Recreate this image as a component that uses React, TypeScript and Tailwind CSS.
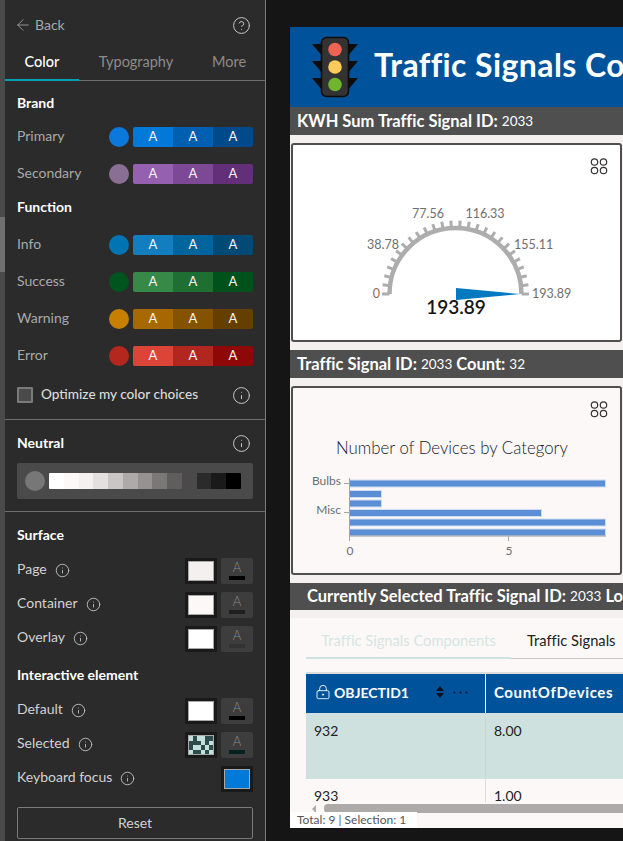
import React from "react";
import { ArrowLeft, CircleHelp, Info, LockKeyhole } from "lucide-react";

const Heading = ({ children, className = "" }: { children: React.ReactNode; className?: string }) => (
  <div className={`h-6 flex items-center text-[14px] font-bold text-white ${className}`}>{children}</div>
);

const ColorRow = ({ label, dot, shades, className = "" }: { label: string; dot: string; shades: string[]; className?: string }) => (
  <div className={`h-5 flex items-center ${className}`}>
    <span className="w-[92px] text-[14px] text-[#a9a9a9] -mt-[3px]">{label}</span>
    <span className="w-5 h-5 rounded-full" style={{ backgroundColor: dot }} />
    <div className="ml-1 flex w-[120px] h-5 rounded-[2px] overflow-hidden">
      {shades.map((s, i) => (
        <span key={i} className="flex-1 flex items-center justify-center pb-[1px] text-[13px] text-[#f4f4f4]" style={{ backgroundColor: s }}>A</span>
      ))}
    </div>
  </div>
);

const SmallInfo = ({ className = "" }: { className?: string }) => (
  <Info size={15} strokeWidth={1.5} className={`text-[#bdbdbd] -mt-[1px] ${className}`} />
);

const Swatch = ({ fill, checker }: { fill?: string; checker?: boolean }) => (
  <div className="w-8 h-[26px] bg-[#1a1a1a] flex items-center justify-center">
    <div className="w-[26px] h-5 border border-[#a8a8a8]" style={{ backgroundColor: fill }}>
      {checker && (
        <svg viewBox="0 0 6 4" preserveAspectRatio="none" className="w-full h-full block" shapeRendering="crispEdges">
          <rect width="6" height="4" fill="#2f4c4c" />
          {[[0,0],[2,0],[3,0],[3,1],[5,1],[1,2],[2,2],[4,2],[0,3],[3,3],[5,3]].map(([x, y], i) => (
            <rect key={i} x={x} y={y} width="1" height="1" fill="#c4dfdc" />
          ))}
        </svg>
      )}
    </div>
  </div>
);

const TextBox = ({ bar }: { bar: string }) => (
  <div className="w-8 h-[26px] ml-1 bg-[#3d3d3d] rounded-[2px] flex flex-col items-center pt-[3px]">
    <span className="text-[13px] leading-[13px] font-light text-[#8a8a8a]">A</span>
    <span className="w-4 h-1 mt-[2px]" style={{ backgroundColor: bar }} />
  </div>
);

const SurfaceRow = ({ label, fill, bar, checker, className = "" }: { label: string; fill?: string; bar: string; checker?: boolean; className?: string }) => (
  <div className={`h-[26px] flex items-center ${className}`}>
    <span className="text-[14px] text-[#d2d2d2] -mt-[5px]">{label}</span>
    <SmallInfo className="ml-2" />
    <div className="ml-auto flex">
      <Swatch fill={fill} checker={checker} />
      <TextBox bar={bar} />
    </div>
  </div>
);

const TitleBar = ({ children, className = "" }: { children: React.ReactNode; className?: string }) => (
  <div className={`shrink-0 bg-[#4f4f4f] flex items-center whitespace-nowrap text-white text-[16.5px] font-bold [font-variant-ligatures:none] ${className}`}>{children}</div>
);

const Small = ({ children }: { children: React.ReactNode }) => <span className="text-[13.5px] font-normal">{children}</span>;

const Gauge = () => {
  const cx = 455.5;
  const cy = 294;
  const ticks = Array.from({ length: 26 }, (_, i) => (Math.PI * i) / 25);
  return (
    <svg viewBox="293 145 327 195" className="w-[327px] h-[195px] block">
      <g fill="none" stroke="#adadad">
        <path d={`M${cx - 66} ${cy} A66 66 0 0 1 ${cx + 66} ${cy}`} strokeWidth="4.5" />
        {ticks.map((a, i) => (
          <line key={i} x1={cx - 66 * Math.cos(a)} y1={cy - 66 * Math.sin(a)} x2={cx - 73.5 * Math.cos(a)} y2={cy - 73.5 * Math.sin(a)} strokeWidth="3" />
        ))}
      </g>
      <polygon points="456,288 456,300 520,294" fill="#0079c1" />
      <g fill="#6e6e6e" fontSize="12.5">
        <text x="380" y="298" textAnchor="end" fill="#8a6a55">0</text>
        <text x="367" y="249">38.78</text>
        <text x="428" y="218" textAnchor="middle">77.56</text>
        <text x="485" y="218" textAnchor="middle">116.33</text>
        <text x="514" y="249">155.11</text>
        <text x="532" y="298">193.89</text>
      </g>
      <text x="456" y="314" textAnchor="middle" fontSize="19" fontWeight="600" fill="#151515">193.89</text>
      <g fill="none" stroke="#333" strokeWidth="1.2">
        <circle cx="594.5" cy="162" r="3.2" />
        <circle cx="603.5" cy="162" r="3.2" />
        <circle cx="594.5" cy="170.5" r="3.2" />
        <circle cx="603.5" cy="170.5" r="3.2" />
      </g>
    </svg>
  );
};

const Chart = () => {
  const bars = [
    [480, 8],
    [490.5, 1],
    [500, 1],
    [509.5, 6],
    [519, 8],
    [529, 8],
  ];
  return (
    <svg viewBox="293 388 327 185" className="w-[327px] h-[185px] block">
      <g fill="none" stroke="#333" strokeWidth="1.2">
        <circle cx="594.5" cy="405" r="3.2" />
        <circle cx="603.5" cy="405" r="3.2" />
        <circle cx="594.5" cy="413.5" r="3.2" />
        <circle cx="603.5" cy="413.5" r="3.2" />
      </g>
      <text x="452" y="454" textAnchor="middle" fontSize="16.8" fontWeight="300" fill="#20202c">Number of Devices by Category</text>
      <g fill="#5a8fd6" stroke="#cfdcf0" strokeWidth="1">
        {bars.map(([y, v], i) => (
          <rect key={i} x="349.5" y={y} width={v * 32} height="7" />
        ))}
      </g>
      <g stroke="#a5a5a5" strokeWidth="1" fill="none">
        <line x1="349.5" y1="478" x2="349.5" y2="541" />
        <line x1="349.5" y1="536" x2="606" y2="536" />
        <line x1="344" y1="483.5" x2="349" y2="483.5" />
        <line x1="344" y1="512.5" x2="349" y2="512.5" />
        <line x1="508.5" y1="536" x2="508.5" y2="541" />
      </g>
      <g fill="#6e6e6e" fontSize="12">
        <text x="341" y="485" textAnchor="end">Bulbs</text>
        <text x="341" y="514" textAnchor="end">Misc</text>
        <text x="350" y="555" textAnchor="middle">0</text>
        <text x="509" y="555" textAnchor="middle">5</text>
      </g>
    </svg>
  );
};

const TrafficLight = () => (
  <svg viewBox="312 36 46 62" className="w-[46px] h-[62px] ml-[22px] shrink-0">
    <g fill="#0d0d0d">
      {[44, 61, 78].map((y) => (
        <g key={y}>
          <polygon points={`312,${y} 323,${y} 323,${y + 13}`} />
          <polygon points={`358,${y} 347,${y} 347,${y + 13}`} />
        </g>
      ))}
    </g>
    <rect x="321.5" y="37.5" width="27" height="59" rx="5" fill="#333333" stroke="#0d0d0d" strokeWidth="1.6" />
    <circle cx="335" cy="49.5" r="6.8" fill="#ee6352" />
    <circle cx="335" cy="67" r="6.8" fill="#fdcb58" />
    <circle cx="335" cy="84.5" r="6.8" fill="#6fb52f" />
  </svg>
);

const SortIcon = ({ className = "" }: { className?: string }) => (
  <svg viewBox="0 0 8 12" className={`w-2 h-3 shrink-0 ${className}`}>
    <path d="M4 0 L8 5 L0 5 Z M4 12 L8 7 L0 7 Z" fill="#0f0f1f" />
  </svg>
);

const Dots = () => (
  <svg viewBox="0 0 15 3" className="w-[15px] h-[3px] ml-[9px] shrink-0">
    <circle cx="1.5" cy="1.5" r="1" fill="#0f0f1f" />
    <circle cx="7.5" cy="1.5" r="1" fill="#0f0f1f" />
    <circle cx="13.5" cy="1.5" r="1" fill="#0f0f1f" />
  </svg>
);

export default function App() {
  return (
    <div className="w-[623px] h-[841px] flex overflow-hidden bg-[#151515] font-[Lato,sans-serif]">
      <div className="w-[5px] shrink-0 bg-[#4a4a4a] flex flex-col">
        <div className="h-[217px]" />
        <div className="h-[55px] bg-[#707070]" />
      </div>

      <aside className="w-[261px] shrink-0 h-full bg-[#2b2b2b] border-r border-[#7a7a7a] flex flex-col">
        <div className="h-6 mt-[13px] flex items-center pl-[9px] pr-[14px] text-[14px] text-[#a9a9a9]">
          <ArrowLeft size={18} strokeWidth={1.1} className="mr-[3px]" />
          <span className="pb-[2px]">Back</span>
          <CircleHelp size={19} strokeWidth={1.2} className="ml-auto text-[#d0d0d0]" />
        </div>
        <div className="h-[35px] mt-[9px] flex text-[14.5px] border-b border-[#6e6e6e] shrink-0">
          <div className="w-[74px] h-[35px] flex items-center justify-center pb-[2px] font-medium text-white border-b-2 border-[#00a0b8]">Color</div>
          <div className="w-[114px] flex items-center justify-center pb-[2px] text-[#8c8c8c]">Typography</div>
          <div className="flex-1 flex items-center justify-center pb-[2px] text-[#8c8c8c]">More</div>
        </div>

        <div className="px-3 pt-[10px]">
          <Heading className="pb-[2px]">Brand</Heading>
          <ColorRow className="mt-3" label="Primary" dot="#0b78dc" shades={["#0079d9", "#005fb0", "#00498a"]} />
          <ColorRow className="mt-[17px]" label="Secondary" dot="#8a6f94" shades={["#9660b0", "#7d4896", "#632f78"]} />
          <Heading className="mt-[11px] pb-[2px]">Function</Heading>
          <ColorRow className="mt-4" label="Info" dot="#0174b3" shades={["#127dbf", "#00659c", "#004a75"]} />
          <ColorRow className="mt-[17px]" label="Success" dot="#00541e" shades={["#378947", "#1f6e32", "#00521a"]} />
          <ColorRow className="mt-[17px]" label="Warning" dot="#c67f00" shades={["#a86800", "#855300", "#643f00"]} />
          <ColorRow className="mt-[17px]" label="Error" dot="#b4271f" shades={["#dd4438", "#b1271f", "#8e0808"]} />
          <div className="h-5 mt-[18px] flex items-center">
            <span className="w-4 h-4 bg-[#4a4a4a] border-2 border-[#7a7a7a] rounded-[1px] mt-[2px]" />
            <span className="ml-2 text-[13.6px] font-medium text-[#dcdcdc]">Optimize my color choices</span>
            <Info size={19} strokeWidth={1.2} className="ml-auto mr-[2px] mt-[2px] text-[#d0d0d0]" />
          </div>
        </div>

        <div className="h-px bg-[#6e6e6e] mt-[15px] shrink-0" />
        <div className="px-3 pt-[11px]">
          <div className="flex items-center h-6 text-[14px] font-bold text-white">
            <span className="pb-[2px]">Neutral</span>
            <Info size={19} strokeWidth={1.2} className="ml-auto mr-[2px] text-[#d0d0d0]" />
          </div>
          <div className="h-9 mt-[8px] bg-[#4a4a4a] rounded-[2px] flex items-center pl-2">
            <span className="w-5 h-5 rounded-full bg-[#777]" />
            <div className="ml-1 w-[192px] h-4 flex rounded-[1px] overflow-hidden">
              {["#ffffff", "#fcf8f7", "#f3f0ef", "#e4e0df", "#c9c6c5", "#adaaa9", "#959291", "#7a7877", "#5f5d5d", "#4a4a4a", "#2b2b2b", "#1a1a1a", "#000000"].map((c) => (
                <span key={c} className="flex-1" style={{ backgroundColor: c }} />
              ))}
            </div>
          </div>
        </div>
        <div className="h-px bg-[#6e6e6e] mt-3 shrink-0" />

        <div className="px-3 pt-[10px]">
          <Heading>Surface</Heading>
          <SurfaceRow className="mt-[12px]" label="Page" fill="#f3f0ef" bar="#000000" />
          <SurfaceRow className="mt-2" label="Container" fill="#fcf8f7" bar="#1f1f1f" />
          <SurfaceRow className="mt-2" label="Overlay" fill="#ffffff" bar="#333333" />
          <Heading className="mt-[10px]">Interactive element</Heading>
          <SurfaceRow className="mt-[12px]" label="Default" fill="#ffffff" bar="#000000" />
          <SurfaceRow className="mt-2" label="Selected" checker bar="#04221f" />
          <div className="h-[26px] mt-2 flex items-center">
            <span className="text-[14px] text-[#d2d2d2] -mt-[5px]">Keyboard focus</span>
            <SmallInfo className="ml-2" />
            <div className="ml-auto">
              <Swatch fill="#0079d9" />
            </div>
          </div>
          <button className="mt-[15px] w-[236px] h-8 pb-[2px] border border-[#7a7a7a] rounded-[2px] text-[14px] text-[#d2d2d2]">Reset</button>
        </div>
      </aside>

      <div className="flex-1 min-w-0 pl-[24px] pt-[27px] pb-[13px]">
        <main className="relative w-[333px] h-full overflow-hidden bg-[#f3f0ef] flex flex-col">
          <div className="h-[80px] shrink-0 bg-[#00539b] flex items-center">
            <TrafficLight />
            <span className="ml-4 pb-1 text-[32px] font-bold tracking-[0.4px] [font-variant-ligatures:none] text-white whitespace-nowrap">Traffic Signals Components</span>
          </div>
          <TitleBar className="h-[28px] pl-[7px] pt-[1px]">KWH Sum Traffic Signal ID:&nbsp;<Small>2033</Small></TitleBar>
          <div className="mt-2 mx-px w-[331px] h-[199px] shrink-0 bg-white border-2 border-[#4f4f4f] rounded-[3px]">
            <Gauge />
          </div>
          <TitleBar className="h-[28px] mt-2 pl-[7px] pt-[1px]">Traffic Signal ID:&nbsp;<Small>2033</Small>&nbsp;Count:&nbsp;<Small>32</Small></TitleBar>
          <div className="mt-2 mx-px w-[331px] h-[189px] shrink-0 bg-[#fcf8f7] border-2 border-[#4f4f4f] rounded-[3px]">
            <Chart />
          </div>
          <TitleBar className="h-[27px] mt-2 pl-[17px] pb-[1px]">Currently Selected Traffic Signal ID:&nbsp;<Small>2033</Small>&nbsp;Location</TitleBar>

          <section className="mt-2 flex-1 min-h-0 bg-[#fcf8f7] pl-4 flex flex-col overflow-hidden">
            <div className="h-[41px] shrink-0 flex text-[14.7px] [font-variant-ligatures:none] border-b border-[#c8c8c8]">
              <div className="w-[205px] h-[41px] border-b-2 border-[#cfe2e0] flex items-center justify-center text-[#d6e5e4] shrink-0 pt-[6px]">Traffic Signals Components</div>
              <div className="ml-4 flex items-center whitespace-nowrap text-[#222] pt-[4px]">Traffic Signals</div>
            </div>
            <div className="mt-[13px] h-[2px] bg-[#dcdcdc] shrink-0" />
            <div className="h-[39px] shrink-0 bg-[#00539b] flex text-white text-[14px] font-bold">
              <div className="w-[180px] shrink-0 border-r border-white flex items-center pl-[9px] pb-[3px]">
                <LockKeyhole size={16} strokeWidth={1.3} />
                <span className="ml-[3px]">OBJECTID1</span>
                <SortIcon className="ml-[27px]" />
                <Dots />
              </div>
              <div className="flex-1 flex items-center pl-2 pb-[3px] whitespace-nowrap text-[15px] tracking-[0.6px]">
                CountOfDevices
                <SortIcon className="ml-4" />
              </div>
            </div>
            <div className="h-[65px] shrink-0 bg-[#cee1df] flex text-[14px] text-[#222]">
              <div className="w-[180px] shrink-0 border-r border-[#c4d8d6] pl-2 pt-[7px]">932</div>
              <div className="pl-2 pt-[7px]">8.00</div>
            </div>
            <div className="h-[24px] shrink-0 border-t border-[#cee1df] flex text-[14px] text-[#222] overflow-hidden">
              <div className="w-[180px] shrink-0 border-r border-[#dcdcdc] pl-2 pt-[6px]">933</div>
              <div className="pl-2 pt-[6px]">1.00</div>
            </div>
            <div className="h-[9px] mt-[2px] shrink-0 flex items-center">
              <span className="ml-[6px] w-0 h-0 border-y-[4px] border-y-transparent border-r-[4px] border-r-[#adaaa9]" />
              <span className="ml-[8px] flex-1 h-[9px] rounded-l-[4px] bg-[#adaaa9]" />
            </div>
          </section>
          <div className="absolute left-0 bottom-0 h-4 w-[127px] bg-white pl-[7px] flex items-center text-[12px] text-[#555] whitespace-nowrap">Total: 9 | Selection: 1</div>
        </main>
      </div>
    </div>
  );
}
